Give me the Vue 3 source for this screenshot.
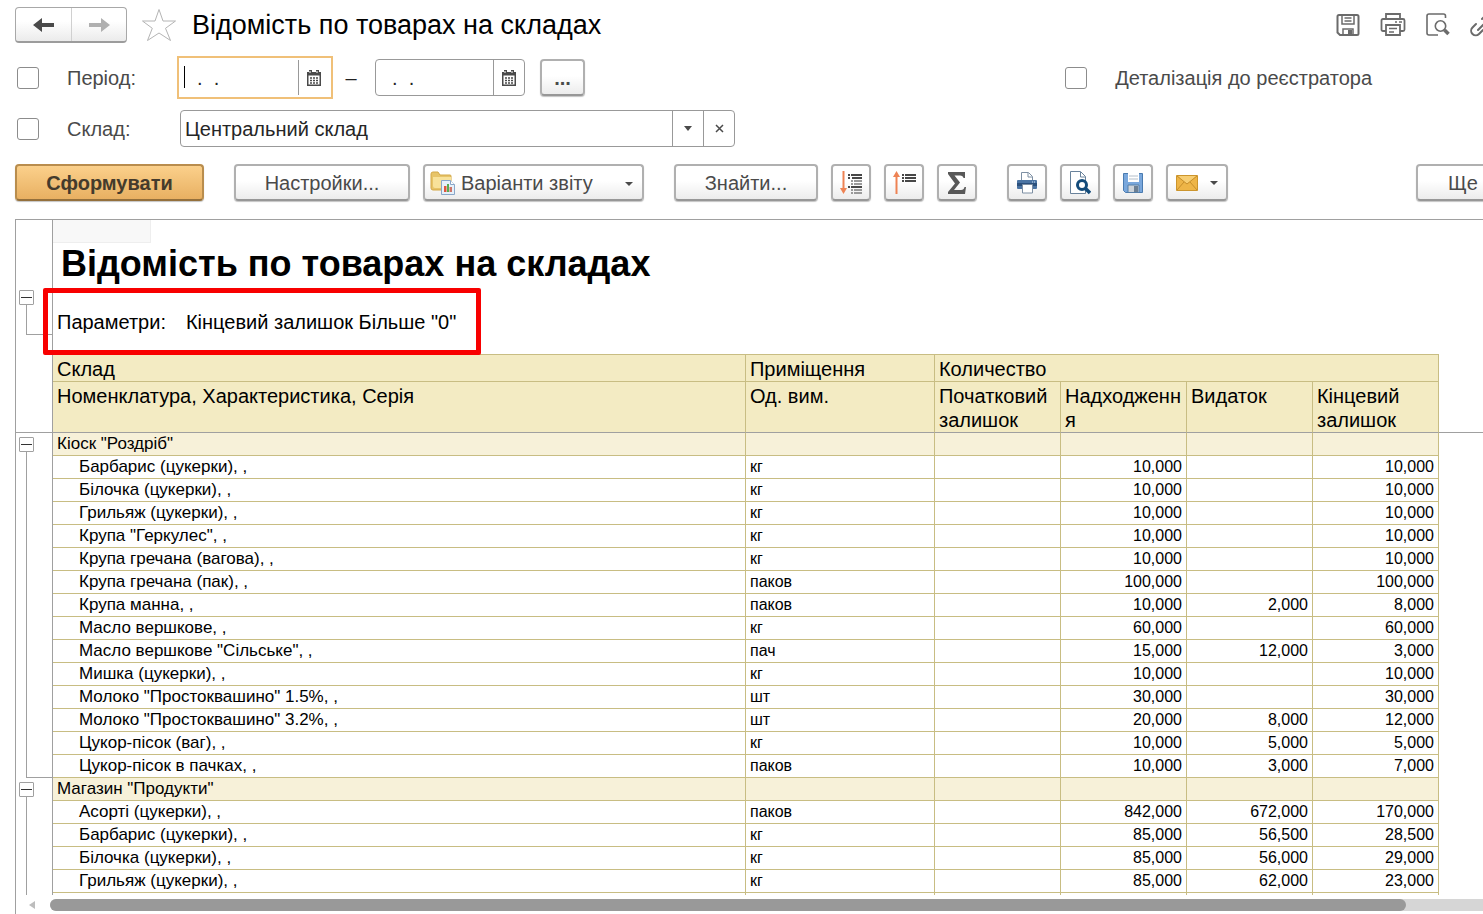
<script setup>
import { ref } from 'vue'

const warehouse = ref('Центральний склад')
const dateFrom = ref('  .  .')
const dateTo = ref('  .  .')

const kiosk = [
  ['Барбарис (цукерки), ,', 'кг', '', '10,000', '', '10,000'],
  ['Білочка (цукерки), ,', 'кг', '', '10,000', '', '10,000'],
  ['Грильяж (цукерки), ,', 'кг', '', '10,000', '', '10,000'],
  ['Крупа "Геркулес", ,', 'кг', '', '10,000', '', '10,000'],
  ['Крупа гречана (вагова), ,', 'кг', '', '10,000', '', '10,000'],
  ['Крупа гречана (пак), ,', 'паков', '', '100,000', '', '100,000'],
  ['Крупа манна, ,', 'паков', '', '10,000', '2,000', '8,000'],
  ['Масло вершкове, ,', 'кг', '', '60,000', '', '60,000'],
  ['Масло вершкове "Сільське", ,', 'пач', '', '15,000', '12,000', '3,000'],
  ['Мишка (цукерки), ,', 'кг', '', '10,000', '', '10,000'],
  ['Молоко "Простоквашино" 1.5%, ,', 'шт', '', '30,000', '', '30,000'],
  ['Молоко "Простоквашино" 3.2%, ,', 'шт', '', '20,000', '8,000', '12,000'],
  ['Цукор-пісок (ваг), ,', 'кг', '', '10,000', '5,000', '5,000'],
  ['Цукор-пісок в пачках, ,', 'паков', '', '10,000', '3,000', '7,000'],
]
const shop = [
  ['Асорті (цукерки), ,', 'паков', '', '842,000', '672,000', '170,000'],
  ['Барбарис (цукерки), ,', 'кг', '', '85,000', '56,500', '28,500'],
  ['Білочка (цукерки), ,', 'кг', '', '85,000', '56,000', '29,000'],
  ['Грильяж (цукерки), ,', 'кг', '', '85,000', '62,000', '23,000'],
  ['', '', '', '', '', ''],
]
const groups = [
  { name: 'Кіоск "Роздріб"', rows: kiosk },
  { name: 'Магазин "Продукти"', rows: shop },
]
</script>

<template>
  <div class="window">
    <header class="titlebar">
      <div class="nav">
        <button type="button" aria-label="Назад">
          <svg width="22" height="16" viewBox="0 0 22 16"><path d="M0 8 9 1v5h12v4H9v5z" fill="#4a4a4a" /></svg>
        </button>
        <button type="button" aria-label="Вперед">
          <svg width="22" height="16" viewBox="0 0 22 16"><path d="M22 8 13 1v5H1v4h12v5z" fill="#b0b0b0" /></svg>
        </button>
      </div>
      <button type="button" class="star" aria-label="Обране">
        <svg width="36" height="34" viewBox="0 0 36 34"><path d="M18 1.500 22 13H34.500L24.500 20.300 29.500 32.500 18 25 6.500 32.500 11.300 20.300 1.500 13H14z" fill="#fff" stroke="#b4b4b4" /></svg>
      </button>
      <h1>Відомість по товарах на складах</h1>
      <div class="system">
        <button type="button" aria-label="Зберегти">
          <svg width="24" height="24" viewBox="0 0 24 24" fill="none" stroke="#6b6b6b" stroke-width="2">
            <path d="M3 2h18q1.500 0 1.500 1.500v17q0 1.500-1.500 1.500H4l-2.500-2.500v-16Q1.500 2 3 2z" /><path d="M6 2v9h12V2M7 22v-6h10v6" stroke-width="1.500" /><path d="M8.500 5h7M8.500 8h7" stroke-width="1.500" /><path d="M12 17h4v4h-4z" fill="#6b6b6b" stroke="none" />
          </svg>
        </button>
        <button type="button" aria-label="Друк">
          <svg width="26" height="24" viewBox="0 0 26 24" fill="none" stroke="#6b6b6b" stroke-width="1.800">
            <path d="M6 5V1h14v4M6 18H3q-1.500 0-1.500-1.500v-9Q1.500 6 3 6h20q1.500 0 1.500 1.500v9q0 1.500-1.500 1.500h-3" /><path d="M6 12h14v10H6z" /><path d="M9 15.500h8M9 19h5M15 9h2M19 9h3" stroke-width="1.500" />
          </svg>
        </button>
        <button type="button" aria-label="Попередній перегляд">
          <svg width="24" height="24" viewBox="0 0 24 24" fill="none" stroke="#6b6b6b" stroke-width="1.600">
            <path d="M19.500 5V3q0-2-2-2H3Q1 1 1 3v17q0 2 2 2h9" /><circle cx="14.500" cy="13" r="5.200" /><path d="m18.500 17 4 4" stroke-width="3.500" />
          </svg>
        </button>
        <button type="button" aria-label="Отримати посилання">
          <svg width="26" height="24" viewBox="0 0 26 24" fill="none" stroke="#6b6b6b" stroke-width="2" stroke-linecap="round">
            <path d="m8 17 9-9M6 11l-3.500 3.500a4.500 4.500 0 0 0 6.500 6.500l4-4M12 6l4-4a4.500 4.500 0 0 1 6.500 6.500L18 13" />
          </svg>
        </button>
      </div>
    </header>

    <div class="filters">
      <div class="filter-row">
        <input id="use-period" type="checkbox" class="check">
        <label class="caption" for="use-period">Період:</label>
        <div class="focus-ring">
          <div class="field date active">
            <input v-model="dateFrom" type="text" aria-label="Початок періоду">
            <i class="caret"></i>
            <button type="button" aria-label="Календар">
              <svg width="14" height="16" viewBox="0 0 14 16"><path d="M0 2h2V0h3v2h4V0h3v2h2v14H0z" fill="#4a4a4a" /><path d="M1.500 5.500h11v9h-11z" fill="#fff" /><path d="M3 8h2m1 0h2m1 0h2M3 10.500h2m1 0h2m1 0h2M3 13h2m1 0h2m1 0h2" stroke="#4a4a4a" stroke-width="1.500" /><path d="M3 1v2m7-2v2" stroke="#fff" /></svg>
            </button>
          </div>
        </div>
        <span class="dash">–</span>
        <div class="field date">
          <input v-model="dateTo" type="text" aria-label="Кінець періоду">
          <button type="button" aria-label="Календар">
            <svg width="14" height="16" viewBox="0 0 14 16"><path d="M0 2h2V0h3v2h4V0h3v2h2v14H0z" fill="#4a4a4a" /><path d="M1.500 5.500h11v9h-11z" fill="#fff" /><path d="M3 8h2m1 0h2m1 0h2M3 10.500h2m1 0h2m1 0h2M3 13h2m1 0h2m1 0h2" stroke="#4a4a4a" stroke-width="1.500" /><path d="M3 1v2m7-2v2" stroke="#fff" /></svg>
          </button>
        </div>
        <button type="button" class="btn more">...</button>
        <div class="detail">
          <input id="detail" type="checkbox" class="check">
          <label for="detail">Деталізація до реєстратора</label>
        </div>
      </div>
      <div class="filter-row">
        <input id="use-store" type="checkbox" class="check">
        <label class="caption" for="use-store">Склад:</label>
        <div class="field store">
          <input v-model="warehouse" type="text" aria-label="Склад">
          <button type="button" aria-label="Вибрати"><svg width="8" height="5" viewBox="0 0 8 5"><path d="M0 0h8L4 5z" fill="#4a4a4a" /></svg></button>
          <button type="button" aria-label="Очистити"><svg width="9" height="9" viewBox="0 0 9 9"><path d="m1 1 7 7m0-7L1 8" stroke="#4a4a4a" stroke-width="1.500" /></svg></button>
        </div>
      </div>
    </div>

    <div class="toolbar">
      <div class="group">
        <button type="button" class="btn primary">Сформувати</button>
      </div>
      <div class="group">
        <button type="button" class="btn settings">Настройки...</button>
        <button type="button" class="btn variants">
          <svg width="26" height="26" viewBox="0 0 26 26">
            <path d="M1 4q0-2 2-2h5l2 3h10q1 0 1 1v14H3q-2 0-2-2z" fill="#e7c468" stroke="#d3a847" /><path d="M3 7h18v11H5q-2 0-2-2z" fill="#f8e29a" />
            <path d="M11.500 10.500h9l4 4v10h-13z" fill="#e6f0fa" stroke="#89a7c9" /><path d="M20.500 10.500v4h4" fill="#fff" stroke="#89a7c9" /><path d="M14 16h2.500v6H14z" fill="#e0563e" /><path d="M17 14h2v8h-2z" fill="#58ad51" /><path d="M19.500 17h2.500v5h-2.500z" fill="#cf7568" />
          </svg>
          <span>Варіанти звіту</span>
          <svg class="drop" width="8" height="4" viewBox="0 0 8 4"><path d="M0 0h8L4 4z" fill="#4a4a4a" /></svg>
        </button>
      </div>
      <div class="group">
        <button type="button" class="btn find">Знайти...</button>
        <button type="button" class="btn icon" aria-label="Згорнути групи">
          <svg width="24" height="24" viewBox="0 0 24 24" fill="none">
            <path d="M4.500 0v18" stroke="#ee8354" stroke-width="2" /><path d="M1 17h7l-3.500 6z" fill="#ee8354" />
            <path d="M9 4h2m1 0h11M9 7h2m2 0h10M9 16h2m1 0h11" stroke="#484848" stroke-width="2" /><path d="M12 10h2m1 0h8M12 13h2m1 0h8M12 19h2m1 0h8M12 22h2m1 0h8" stroke="#9a9a9a" stroke-width="2" />
          </svg>
        </button>
        <button type="button" class="btn icon" aria-label="Розгорнути групи">
          <svg width="24" height="24" viewBox="0 0 24 24" fill="none">
            <path d="M4.500 5v18" stroke="#ee8354" stroke-width="2" /><path d="M1 6h7L4.500 0z" fill="#ee8354" />
            <path d="M10 4h2m1 0h11M10 7h2m1 0h11M10 10h2m1 0h11" stroke="#484848" stroke-width="2" />
          </svg>
        </button>
        <button type="button" class="btn icon" aria-label="Сума">
          <svg width="20" height="22" viewBox="0 0 20 22"><path d="M1 0h17v6h-1.500Q16 3.500 13 3.500H7.500L13 10.500 7 18h7q3 0 3.500-3H19l-1 7H1v-2l7-8.500L1 2z" fill="#585858" /></svg>
        </button>
      </div>
      <div class="group">
        <button type="button" class="btn icon" aria-label="Друк">
          <svg width="22" height="22" viewBox="0 0 22 22">
            <path d="M5.500 9V.5h7l4 4V9" fill="#fff" stroke="#7d8fa3" /><path d="M12 1v4h4" fill="none" stroke="#7d8fa3" />
            <path d="M2 8h18q1 0 1 1v7q0 1-1 1H2q-1 0-1-1V9q0-1 1-1z" fill="#4b74a3" /><path d="M1 12.500h20" stroke="#2b507c" stroke-width="3" /><path d="M16 10h1m1 0h1" stroke="#cfe0f2" /><path d="M6.500 12.500h10v8.500h-10z" fill="#fff" stroke="#7d8fa3" />
          </svg>
        </button>
        <button type="button" class="btn icon" aria-label="Попередній перегляд">
          <svg width="22" height="24" viewBox="0 0 22 24">
            <path d="M1.500.5h10l5 5v17h-15z" fill="#fff" stroke="#69829b" /><path d="M11.500 1v5h5" fill="none" stroke="#69829b" />
            <circle cx="13" cy="14" r="4.500" fill="#fff" stroke="#124b7a" stroke-width="3" /><path d="m16 17 5 5" stroke="#124b7a" stroke-width="3.500" />
          </svg>
        </button>
        <button type="button" class="btn icon" aria-label="Зберегти">
          <svg width="22" height="22" viewBox="0 0 22 22">
            <path d="M1.500 1.500h19v19h-17l-2-2z" fill="#79a7dc" stroke="#4a7bb0" /><path d="M6 1h11v9H6z" fill="#fff" /><path d="M7 4h9M7 7h9" stroke="#b4bfca" /><path d="M6 13h11v7.500H6z" fill="#cdd3d9" stroke="#557fa9" /><path d="M12 14h4v6h-4z" fill="#6c7f93" />
          </svg>
        </button>
        <button type="button" class="btn mail" aria-label="Надіслати">
          <svg width="22" height="16" viewBox="0 0 22 16"><path d="M.5.5h21v15H.5z" fill="#eeb547" stroke="#cc952d" /><path d="M2 1h18l-9 8z" fill="#f7ce73" /><path d="m1 1 10 8L21 1M1 15l7-8m13 8-7-8" fill="none" stroke="#c78f2c" /></svg>
          <svg width="8" height="4" viewBox="0 0 8 4"><path d="M0 0h8L4 4z" fill="#4a4a4a" /></svg>
        </button>
      </div>
      <button type="button" class="btn all">Ще</button>
    </div>

    <main class="report">
      <div class="sheet">
        <section class="top">
          <div class="rail">
            <button type="button" class="toggle" aria-label="Згорнути параметри"></button>
            <i class="branch"></i>
          </div>
          <div class="intro">
            <div class="ghost"></div>
            <h2>Відомість по товарах на складах</h2>
            <p><span>Параметри:</span><span>Кінцевий залишок Більше "0"</span></p>
          </div>
          <i class="highlight"></i>
        </section>
        <table>
          <colgroup>
            <col class="c-rail"><col><col class="c-unit"><col class="c-num"><col class="c-num"><col class="c-num"><col class="c-num"><col class="c-tail">
          </colgroup>
          <thead>
            <tr class="h1">
              <td class="rail-cell"></td>
              <th>Склад</th>
              <th>Приміщення</th>
              <th colspan="4">Количество</th>
              <td class="tail"></td>
            </tr>
            <tr class="h2">
              <td class="rail-cell"></td>
              <th>Номенклатура, Характеристика, Серія</th>
              <th>Од. вим.</th>
              <th>Початковий залишок</th>
              <th>Надходження</th>
              <th>Видаток</th>
              <th>Кінцевий залишок</th>
              <td class="tail"></td>
            </tr>
          </thead>
          <tbody v-for="g in groups" :key="g.name">
            <tr class="total">
              <td class="rail-cell tree" :rowspan="g.rows.length + 1">
                <button type="button" class="toggle" aria-label="Згорнути групу"></button>
              </td>
              <td class="name">{{ g.name }}</td>
              <td v-for="n in 5" :key="n"></td>
            </tr>
            <tr v-for="(r, i) in g.rows" :key="i" class="item">
              <td v-for="(c, j) in r" :key="j" :class="{ name: j === 0 }">{{ c }}</td>
            </tr>
          </tbody>
        </table>
      </div>
      <div class="scroll">
        <svg width="6" height="8" viewBox="0 0 6 8"><path d="M6 0v8L0 4z" fill="#bdbdbd" /></svg>
        <div class="track"><div class="thumb"></div></div>
      </div>
    </main>
  </div>
</template>

<style>
html, body { background: #fff; }
</style>

<style scoped>
* { box-sizing: border-box; }
.window {
  height: 100vh;
  display: flex;
  flex-direction: column;
  overflow: hidden;
  background: #fff;
  color: #4a4a4a;
  font: 20px/24px "Liberation Sans", Arial, sans-serif;
}
svg { display: block; flex: none; }
button, input { font: inherit; color: inherit; margin: 0; }
button { padding: 0; background: none; border: 0; }
.titlebar { display: flex; align-items: center; height: 50px; padding-left: 15px; flex: none; }
.nav {
  display: flex;
  height: 36px;
  border: 1px solid #a8a8a8;
  border-bottom: 2px solid #9c9c9c;
  border-radius: 4px;
  background: linear-gradient(#fff 40%, #ebebeb);
}
.nav button { width: 55px; display: grid; place-items: center; }
.nav button + button { border-left: 1px solid #d0d0d0; }
.star { margin-left: 14px; }
h1 { margin: 0 0 0 15px; font-size: 27px; font-weight: 400; line-height: 32px; color: #000; }
.system { margin: 0 -13px 0 auto; display: flex; gap: 20px; }
.filters { display: flex; flex-direction: column; gap: 8px; padding: 6px 111px 0 17px; flex: none; }
.filter-row { display: flex; align-items: center; height: 43px; }
.check {
  appearance: none;
  width: 22px;
  height: 22px;
  border: 1px solid #8c8c8c;
  border-radius: 3px;
  background: #fff;
}
.caption { width: 110px; margin-left: 28px; white-space: nowrap; }
.focus-ring { padding: 1px; border: 2px solid #f0c078; width: 156px; }
.field {
  position: relative;
  display: flex;
  height: 37px;
  border: 1px solid #999;
  border-radius: 4px;
  background: #fff;
}
.field.active { border-color: transparent; }
.field input { flex: 1; min-width: 0; padding: 0 0 0 4px; border: 0; outline: 0; background: none; color: #262626; }
.field button { width: 31px; display: grid; place-items: center; border-left: 1px solid #999; }
.date { width: 150px; }
.date input { padding-left: 5px; }
.caret { position: absolute; left: 3px; top: 6px; width: 1px; height: 22px; background: #000; }
.dash { width: 42px; padding-right: 6px; text-align: center; color: #222; }
.more { width: 45px; height: 36px; margin-left: 15px; }
.detail { margin-left: auto; display: flex; align-items: center; gap: 28px; }
.store { width: 555px; margin-left: 3px; }
.btn {
  display: flex;
  align-items: center;
  justify-content: center;
  flex: none;
  height: 37px;
  border: 2px solid #b0b0b0;
  border-bottom-color: #979797;
  border-radius: 4px;
  background: linear-gradient(#fff 45%, #ececec);
  box-shadow: 0 1px 1px #c4c4c4;
  white-space: nowrap;
}
.toolbar { display: flex; gap: 30px; margin: 14px -33px 18px 15px; flex: none; }
.group { display: flex; gap: 13px; }
.primary {
  width: 189px;
  border-color: #b98d4d;
  border-bottom-color: #94703c;
  background: linear-gradient(#fbd08b, #e8b062);
  color: #443b2c;
  font-weight: 700;
}
.more { font-weight: 700; }
.settings { width: 176px; }
.variants { width: 221px; justify-content: flex-start; padding-left: 5px; gap: 5px; }
.drop { margin: 2px 9px 0 auto; }
.find { width: 144px; }
.icon { width: 40px; }
.mail { width: 62px; gap: 12px; }
.all { width: 100px; margin-left: auto; padding-left: 30px; justify-content: flex-start; }
.report {
  flex: 1;
  min-height: 0;
  display: flex;
  flex-direction: column;
  margin-left: 15px;
  border-left: 1px solid #a0a0a0;
  border-top: 1px solid #a0a0a0;
  color: #000;
}
.sheet { flex: 1; min-height: 0; overflow: hidden; }
.top { position: relative; display: flex; height: 134px; }
.rail { width: 37px; flex: none; border-right: 1px solid #a0a0a0; padding-top: 70px; }
.toggle {
  display: block;
  position: relative;
  width: 15px;
  height: 15px;
  margin-left: 3px;
  border: 1px solid #a0a0a0;
  border-radius: 1px;
  background: #fff;
}
.toggle::after { content: ""; position: absolute; left: 1px; right: 1px; top: 6px; height: 1px; background: #333; }
.branch { display: block; margin-left: 10px; height: 30px; border: solid #a0a0a0; border-width: 0 0 1px 1px; }
.ghost { width: 98px; height: 23px; background: #f8f8f8; border: solid #eee; border-width: 0 1px 1px 0; }
.intro h2 { margin: 0 0 0 8px; font-size: 36px; line-height: 42px; }
.intro p { display: flex; gap: 20px; margin: 25px 0 0 4px; }
.highlight {
  position: absolute;
  left: 27px;
  top: 68px;
  width: 438px;
  height: 67px;
  border: 5px solid #f80000;
  border-radius: 2px;
}
table { width: 100%; table-layout: fixed; border-collapse: separate; border-spacing: 0; }
.c-rail { width: 37px; }
.c-unit { width: 189px; }
.c-num { width: 126px; }
.c-tail { width: 44px; }
th, td { padding: 0 4px; text-align: left; vertical-align: top; font-weight: 400; border: solid #c8bd83; border-width: 0 1px 1px 0; }
th { background: #f3ebc3; overflow-wrap: anywhere; }
.h1 th { height: 28px; border-top-width: 1px; padding-top: 2px; }
.h2 th { height: 51px; border-bottom-color: #a0a0a0; padding-top: 2px; }
.tail { border-width: 0; }
.h2 .tail { border-bottom: 1px solid #a0a0a0; }
.rail-cell { padding: 0; border-color: #a0a0a0; border-bottom-width: 0; }
.h2 .rail-cell { border-bottom-width: 1px; }
.tree { position: relative; padding-top: 4px; }
.tree::after {
  content: "";
  position: absolute;
  left: 10px;
  right: 0;
  top: 19px;
  bottom: 0;
  border: solid #a0a0a0;
  border-width: 0 0 1px 1px;
}
tbody td { height: 23px; font-size: 16px; line-height: 22px; }
tbody .name { font-size: 17px; }
.total td:not(.rail-cell) { background: #f7f1d9; }
.item .name { padding-left: 26px; }
.item td:nth-child(n + 3) { text-align: right; }
.scroll { display: flex; align-items: center; height: 12px; margin: 4px 0 3px 13px; gap: 15px; flex: none; }
.track { flex: 1; height: 12px; background: #d6d6d6; border-radius: 6px 0 0 6px; }
.thumb { width: calc(100% - 77px); height: 12px; border-radius: 6px; background: #999; }
</style>
